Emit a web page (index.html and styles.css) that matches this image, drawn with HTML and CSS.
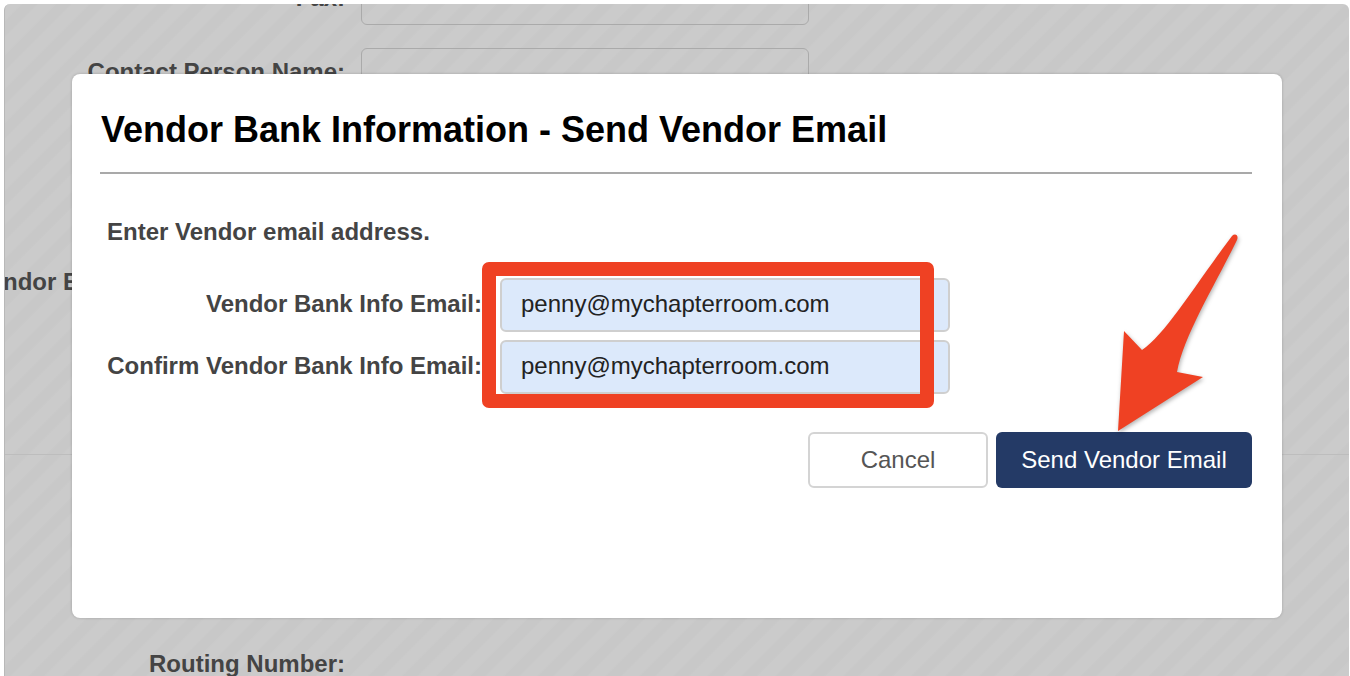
FILE: index.html
```html
<!DOCTYPE html>
<html lang="en">
<head>
    <meta charset="UTF-8">
    <meta name="viewport" content="width=device-width, initial-scale=1.0">
    <title>Vendor Bank Information</title>
    <link rel="stylesheet" href="styles.css">
</head>
<body>
    <div class="window">
        <!-- page behind the overlay -->
        <div class="behind">
            <div class="row row-fax">
                <span class="row-label">Fax:</span>
                <span class="row-input"></span>
            </div>
            <div class="row row-contact">
                <span class="row-label">Contact Person Name:</span>
                <span class="row-input"></span>
            </div>
            <div class="row-email">Vendor Email</div>
            <div class="behind-line"></div>
            <div class="row row-routing">
                <span class="row-label">Routing Number:</span>
            </div>
        </div>

        <div class="modal">
            <h1 class="modal-title">Vendor Bank Information - Send Vendor Email</h1>
            <p class="modal-intro">Enter Vendor email address.</p>
            <form class="email-form">
                <div class="field">
                    <label for="email1">Vendor Bank Info Email:</label>
                    <input type="text" id="email1" value="penny@mychapterroom.com">
                </div>
                <div class="field">
                    <label for="email2">Confirm Vendor Bank Info Email:</label>
                    <input type="text" id="email2" value="penny@mychapterroom.com">
                </div>
                <div class="actions">
                    <button type="button" class="btn-cancel">Cancel</button>
                    <button type="button" class="btn-send">Send Vendor Email</button>
                </div>
            </form>
        </div>

        <!-- annotations drawn on top of the screenshot -->
        <div class="callout-box"></div>
        <svg class="callout-arrow" width="130" height="220" viewBox="1110 230 130 220">
            <path d="M1118 431 L1124 331 L1142 350 C1165 335 1195 285 1232 236 C1235 233 1239 235 1237 240 C1215 285 1184 335 1177 372 L1203 377 Z"/>
        </svg>
    </div>
</body>
</html>
```

FILE: styles.css
```css
body {
    margin: 0;
    height: 676px;
    overflow: hidden;
    background: #fff;
    font-family: "Liberation Sans", Arial, sans-serif;
    color: #444;
}

.window {
    position: relative;
    height: 672px;
    margin: 4px 1px 0 4px;
    overflow: hidden;
    box-sizing: border-box;
    border-left: 1px solid #b8b8b8;
    border-radius: 6px 6px 0 0;
    background: repeating-linear-gradient(135deg, #cbcbcb 0, #cbcbcb 11px, #c8c8c8 13px, #c8c8c8 22px, #cbcbcb 24px);
}

.behind {
    margin-top: -33px;
}

.row {
    display: flex;
    align-items: center;
    gap: 16px;
}

.row-label {
    width: 340px;
    text-align: right;
    font-size: 24px;
    font-weight: bold;
}

.row-input {
    width: 446px;
    height: 52px;
    border: 1px solid #aaa;
    border-radius: 6px;
}

.row-contact {
    margin-top: 23px;
}

.row-contact .row-label {
    padding-bottom: 6px;
}

.row-email {
    margin: 166px 0 0 -30px;
    font-size: 24px;
    font-weight: bold;
}

.behind-line {
    height: 1px;
    margin-top: 158px;
    background: #bdbdbd;
}

.row-routing {
    margin-top: 195px;
}

.modal {
    position: absolute;
    top: 70px;
    left: 67px;
    width: 1210px;
    height: 544px;
    box-sizing: border-box;
    padding: 0 30px 0 28px;
    border-radius: 8px;
    background: #fff;
    box-shadow: 0 0 3px rgba(0, 0, 0, 0.2);
}

.modal-title {
    margin: 0;
    padding: 33px 0 19px 1px;
    border-bottom: 2px solid #a9a9a9;
    font-size: 36px;
    line-height: 46px;
    color: #000;
}

.modal-intro {
    margin: 45px 0 0 7px;
    font-size: 24px;
    font-weight: bold;
    line-height: 26px;
}

.email-form {
    margin-top: 33px;
}

.field {
    display: flex;
    align-items: center;
    gap: 18px;
    margin-bottom: 8px;
}

.field label {
    width: 382px;
    padding-bottom: 3px;
    text-align: right;
    font-size: 24px;
    font-weight: bold;
}

.field input {
    width: 450px;
    height: 54px;
    box-sizing: border-box;
    padding: 0 20px 3px 19px;
    border: 2px solid #cfcfcf;
    border-radius: 6px;
    background: #dce9fb;
    font-family: inherit;
    font-size: 24px;
    color: #222;
}

.actions {
    display: flex;
    justify-content: flex-end;
    gap: 8px;
    margin-top: 38px;
}

.actions button {
    height: 56px;
    border-radius: 6px;
    font-family: inherit;
    font-size: 24px;
}

.btn-cancel {
    width: 180px;
    border: 2px solid #d4d4d4;
    background: #fff;
    color: #555;
}

.btn-send {
    width: 256px;
    border: none;
    background: #243a66;
    color: #fff;
}

.callout-box {
    position: absolute;
    top: 258px;
    left: 477px;
    width: 424px;
    height: 118px;
    border: 14px solid #ef4123;
    border-radius: 7px;
}

.callout-arrow {
    position: absolute;
    top: 226px;
    left: 1105px;
    fill: #ef4123;
    filter: drop-shadow(1px 2px 2px rgba(0, 0, 0, 0.3));
}
```
